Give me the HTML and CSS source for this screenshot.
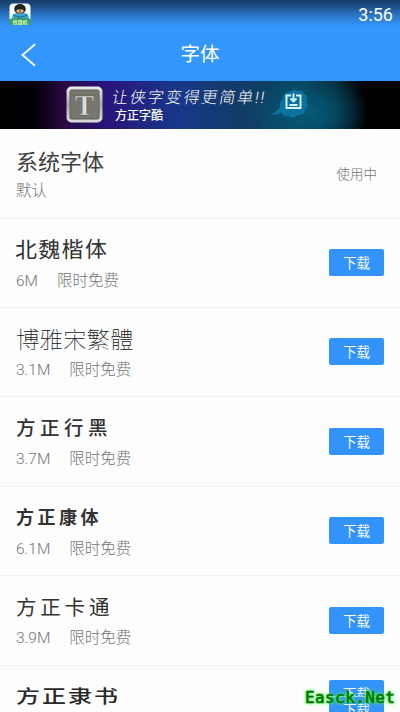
FILE: index.html
```html
<!DOCTYPE html>
<html lang="zh-CN">
<head>
<meta charset="utf-8">
<title>字体</title>
<link rel="stylesheet" href="styles.css">
</head>
<body>
<header class="top">
  <div class="status">
    <svg class="app" width="22" height="22" viewBox="0 0 22 22">
      <rect x=".5" y=".5" width="21" height="21" rx="4" fill="#f6ffff"/>
      <path d="M3 16q0-6 5-6h7q5 0 5 6z" fill="#3ba9d8"/>
      <ellipse cx="11" cy="6" rx="5.800" ry="5" fill="#242423"/>
      <path d="M7 7q4-2 8 0-.5 4-4 4T7 7z" fill="#a9794f"/>
      <path d="M8 8h2M12 8h2" stroke="#fff" stroke-width="1.200"/>
      <path d="M4 12q7 4 14 0" fill="none" stroke="#167fa5" stroke-width="1.500"/>
      <path d="M0 16q11-3 22 0v3q0 3-3 3H3q-3 0-3-3z" fill="#3b9b72"/>
      <text class="apptext" x="11" y="20.500">找靓机</text>
    </svg>
    <span class="clock">3:56</span>
  </div>
  <div class="nav">
    <svg class="back" width="16" height="24" viewBox="0 0 16 24"><path d="M14 1.200L1.500 12 14 22.800" fill="none" stroke="#fff" stroke-width="1.800"/></svg>
    <h1>字体</h1>
  </div>
</header>
<div class="banner">
  <svg class="logo" width="37" height="37" viewBox="0 0 37 37">
    <defs><linearGradient id="metal" x2="0" y2="1"><stop stop-color="#eee"/><stop offset=".5" stop-color="#aaa"/><stop offset="1" stop-color="#ddd"/></linearGradient></defs>
    <rect x=".5" y=".5" width="36" height="36" rx="5" fill="url(#metal)"/>
    <rect x="4" y="4" width="29" height="29" rx="1.500" fill="#77776e" stroke="#5d5d59"/>
    <text class="logotext" x="18.500" y="28.500">T</text>
  </svg>
  <div class="slogan"><span class="script">让侠字变得更简单!!</span><b>方正字酷</b></div>
  <svg class="splash" width="46" height="34" viewBox="0 0 46 34">
    <path d="M0 28Q8 25 11 20q-1-6 3-8 0-8 7-7 3-4 7-1 6-2 7 3 5 2 2 7 4 5-1 8 0 7-7 6-5 5-9 1-5 1-7-3-6 2-13 2z" fill="#0b719f"/>
    <path d="M22 8.500h-4.500v12.500h14V8.500H27M24.500 6.500v8M21.500 11.500l3 3 3-3M20.500 18h8" fill="none" stroke="#d9f7ff" stroke-width="1.900"/>
  </svg>
</div>
<main>
  <section class="row system"><div><h2>系统字体</h2><p><span>默认</span></p></div><span class="using">使用中</span></section>
  <section class="row"><div><h2 class="kai">北魏楷体</h2><p><span>6M</span><span>限时免费</span></p></div><button>下载</button></section>
  <section class="row"><div><h2 class="song">博雅宋繁體</h2><p><span>3.1M</span><span>限时免费</span></p></div><button>下载</button></section>
  <section class="row"><div><h2 class="hei">方正行黑</h2><p><span>3.7M</span><span>限时免费</span></p></div><button>下载</button></section>
  <section class="row"><div><h2 class="kang">方正康体</h2><p><span>6.1M</span><span>限时免费</span></p></div><button>下载</button></section>
  <section class="row"><div><h2 class="cartoon">方正卡通</h2><p><span>3.9M</span><span>限时免费</span></p></div><button>下载</button></section>
  <section class="row last"><div><h2 class="li">方正隶书</h2></div><div class="pair"><button>下载</button><button>下载</button></div></section>
</main>
<div class="mark">Easck.Net</div>
</body>
</html>
```
FILE: styles.css
```css
* { box-sizing: border-box; margin: 0; padding: 0; }
body {
  width: 400px;
  height: 712px;
  overflow: hidden;
  position: relative;
  background: #fdfdfd;
  font-family: Roboto, "Noto Sans CJK SC", sans-serif;
}
.top {
  height: 81px;
  background: linear-gradient(#173b68 0, #1e4f87 6px, #2c78c9 16px, #3296fd 26px);
  color: #fff;
}
.status { height: 28px; display: flex; justify-content: space-between; padding: 3px 7px 0 9px; }
.apptext { font: bold 5px "Noto Sans CJK SC", sans-serif; fill: #d8f8b0; text-anchor: middle; }
.clock { font-size: 18px; line-height: 23px; }
.nav { height: 53px; display: grid; grid-template-columns: 22px 1fr 22px; align-items: center; }
.back { margin-left: 21px; }
h1 { font-size: 19.5px; line-height: 28px; font-weight: 400; text-align: center; }
.banner {
  height: 48px;
  display: flex;
  align-items: flex-start;
  padding: 5px 0 0 66px;
  color: #fff;
  background: radial-gradient(ellipse 60px 40px at 310px 32px, #075a78, transparent), linear-gradient(90deg, #000 0, #020008 35px, #28083f 62px, #29147a 105px, #17398a 180px, #133b68 235px, #06465f 300px, #032b3b 335px, #000 365px);
}
.logotext { font: bold 29px "Liberation Serif", serif; fill: #ddd; stroke: #555; stroke-width: .5px; text-anchor: middle; }
.slogan { width: 168px; margin-left: 10px; display: flex; flex-direction: column; }
.script { font-size: 16px; line-height: 21px; font-weight: 300; letter-spacing: 1.9px; white-space: nowrap; transform: translate(-1px, 1px) skewX(-10deg); }
.slogan b { font-size: 12px; line-height: 16px; margin: 1px 0 0 2px; font-weight: 500; }
.splash { margin: 1px 0 0 -12px; }
.row {
  height: 89.5px;
  display: flex;
  justify-content: space-between;
  align-items: flex-start;
  padding: 17px 16px 0 16px;
  border-bottom: 1px solid #f3f3f3;
}
.system { padding-top: 18px; }
.system + .row { height: 89px; }
h2 { height: 30px; line-height: 30px; font-size: 22px; font-weight: 400; color: #414141; white-space: nowrap; transform-origin: left center; }
p { height: 24px; line-height: 24px; display: flex; gap: 19px; font-size: 15.5px; font-weight: 300; color: #757575; margin-top: 3px; }
.system p { margin-top: 2px; }
.system h2 { transform: translateY(1px); }
button {
  display: block;
  width: 55px;
  height: 27px;
  margin-top: 13.5px;
  border: 0;
  border-radius: 2px;
  background: #3294fa;
  color: #fff;
  font: 13.5px/27px "Noto Sans CJK SC", sans-serif;
}
.using { font-size: 13.5px; line-height: 20px; font-weight: 300; color: #757575; margin: 17px 7px 0 0; }
.kai { font-size: 22px; letter-spacing: 1.3px; transform: translate(-1px, 0) skewY(-.7deg); color: #333; }
.song { font-size: 23.5px; font-weight: 100; font-family: "Noto Sans CJK TC", sans-serif; color: #111; transform: translateY(-2px) scaleY(.95); }
.hei { font-size: 19.5px; letter-spacing: 4.5px; font-weight: 500; color: #333; }
.kang { font-size: 18px; letter-spacing: 3.5px; font-weight: 700; transform: translateY(-1px); color: #333; }
.cartoon { font-size: 20.5px; letter-spacing: 3.8px; color: #333; }
.li { font-size: 24px; letter-spacing: 2px; font-weight: 500; transform: translateY(-1px) scaleY(.75); color: #292929; }
.last { height: 46.5px; overflow: hidden; border: 0; }
.pair { margin-top: -3px; }
.pair button { margin-top: 0; }
.pair button:first-child { height: 16px; overflow: hidden; border-radius: 2px 2px 0 0; display: flex; justify-content: center; align-items: flex-start; }
.pair button + button { border-top: 1px solid #a5d0ff; line-height: 25px; }
.mark {
  position: absolute;
  left: 305px;
  top: 688px;
  font: 16px/20px "DejaVu Sans Mono", monospace;
  letter-spacing: .4px;
  color: #087308;
  -webkit-text-stroke: .6px #087308;
  text-shadow: 0 0 2px #3f3, 0 0 3px #4f4, 0 0 5px #6f6;
}
```
